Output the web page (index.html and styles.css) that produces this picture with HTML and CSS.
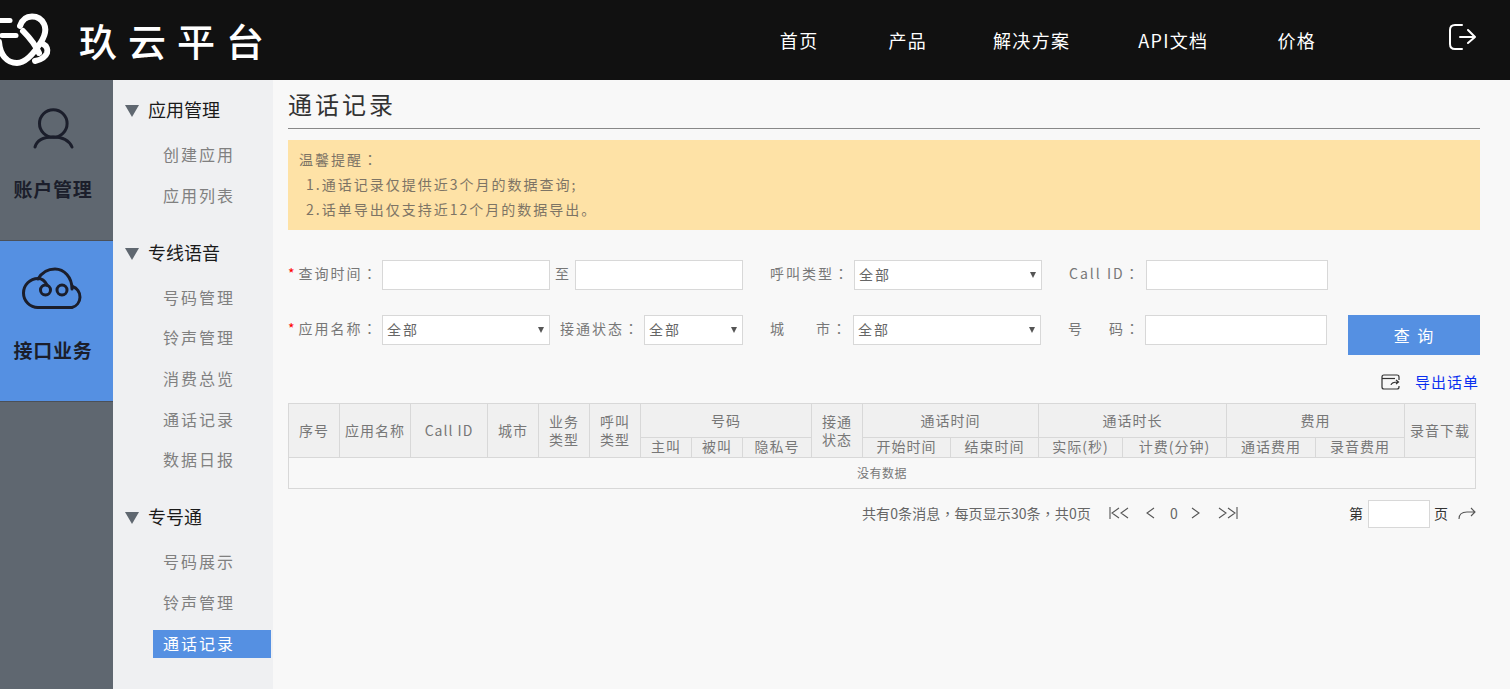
FILE: index.html
```html
<!DOCTYPE html>
<html lang="zh-CN">
<head>
<meta charset="utf-8">
<title>通话记录 - 玖云平台</title>
<link rel="stylesheet" href="styles.css">
</head>
<body>
<header class="topbar">
  <div class="brand">
    <svg class="brand-mark" width="52" height="80" viewBox="0 0 52 80" fill="none" stroke="#fff" stroke-width="6" stroke-linecap="round">
      <path d="M-1 42C0 55 7 63 17 63C27 63 36 50 41 42C46 34 46 28 44 24C41 18 36 16.500 32 16.500C26 16.500 22 20 20 26"/>
      <path d="M23 31C29 37 35 44 39 53"/>
      <path d="M43 44C47 46 48 50 47 53C45 58 40 60 35 61"/>
      <path d="M-2 20.500H10" stroke-width="5"/>
      <path d="M2 35.500H16" stroke-width="5"/>
    </svg>
    <span class="brand-name">玖云平台</span>
  </div>
  <nav class="topnav">
    <a>首页</a><a>产品</a><a>解决方案</a><a>API文档</a><a>价格</a>
  </nav>
  <svg class="logout" width="28" height="28" viewBox="0 0 28 28" fill="none" stroke="#fff" stroke-width="2" stroke-linecap="round" stroke-linejoin="round">
    <path d="M14 2H7C3.500 2 2 4 2 7V21C2 24 3.500 26 7 26H14"/>
    <path d="M12 14H27M20 7L27 14L20 20"/>
  </svg>
</header>
<div class="layout">
  <aside class="rail">
    <div class="rail-item">
      <svg width="90" height="60" viewBox="0 0 90 60" fill="none" stroke="#1b1e2b" stroke-width="3" stroke-linecap="round">
        <circle cx="42.300" cy="28.500" r="13.800"/>
        <path d="M24 52C26 45 32 42 42 42C52 42 58 45 61 52"/>
      </svg>
      <span class="rail-label">账户管理</span>
    </div>
    <div class="rail-item is-active">
      <svg width="90" height="60" viewBox="-1 0 90 60" fill="none" stroke="#1b1e2b" stroke-width="3" stroke-linecap="round">
        <path d="M26 51.500H60A11 11 0 0 0 60.500 30.500"/>
        <path d="M60 33C60 21 52 13 43 13C35 13 29 18 26 23"/>
        <path d="M26 51.500A14.500 14.500 0 0 1 26 22.500C30 22.500 33 25 35 29"/>
        <circle cx="33.500" cy="34" r="5"/>
        <circle cx="50" cy="34" r="5"/>
      </svg>
      <span class="rail-label">接口业务</span>
    </div>
  </aside>
  <aside class="sidebar">
    <section class="side-group">
      <h3 class="side-title"><i class="tri"></i>应用管理</h3>
      <a class="side-link">创建应用</a>
      <a class="side-link">应用列表</a>
    </section>
    <section class="side-group">
      <h3 class="side-title"><i class="tri"></i>专线语音</h3>
      <a class="side-link">号码管理</a>
      <a class="side-link">铃声管理</a>
      <a class="side-link">消费总览</a>
      <a class="side-link">通话记录</a>
      <a class="side-link">数据日报</a>
    </section>
    <section class="side-group">
      <h3 class="side-title"><i class="tri"></i>专号通</h3>
      <a class="side-link">号码展示</a>
      <a class="side-link">铃声管理</a>
      <a class="side-link is-current">通话记录</a>
    </section>
  </aside>
  <main class="content">
    <h1 class="page-title">通话记录</h1>
    <div class="notice">
      <p>温馨提醒<span class="cp" lang="zh-TW">：</span></p>
      <p class="notice-item">1.通话记录仅提供近3个月的数据查询;</p>
      <p class="notice-item">2.话单导出仅支持近12个月的数据导出。</p>
    </div>
    <form class="filters">
      <div class="row">
        <label class="lbl w94"><em>*</em>查询时间<span class="cp" lang="zh-TW">：</span></label>
        <input class="field w168" type="text">
        <span class="to">至</span>
        <input class="field w168" type="text">
        <label class="lbl w84 ml27">呼叫类型<span class="cp" lang="zh-TW">：</span></label>
        <div class="sel w188"><select><option>全部</option></select></div>
        <label class="lbl w77 ml27">Call ID<span class="cp" lang="zh-TW">：</span></label>
        <input class="field w182" type="text">
      </div>
      <div class="row">
        <label class="lbl w94"><em>*</em>应用名称<span class="cp" lang="zh-TW">：</span></label>
        <div class="sel w168"><select><option>全部</option></select></div>
        <label class="lbl w84 ml10">接通状态<span class="cp" lang="zh-TW">：</span></label>
        <div class="sel w99"><select><option>全部</option></select></div>
        <label class="lbl w83 ml27"><span class="gap30">城</span>市<span class="cp" lang="zh-TW">：</span></label>
        <div class="sel w188"><select><option>全部</option></select></div>
        <label class="lbl w77 ml27"><span class="gap25">号</span>码<span class="cp" lang="zh-TW">：</span></label>
        <input class="field w182" type="text">
        <button class="search" type="button">查 询</button>
      </div>
    </form>
    <div class="export">
      <svg width="19" height="16" viewBox="0 0 19 16" fill="none" stroke="#333" stroke-width="1.200">
        <path d="M18 6V3C18 1.500 17 1 16 1H3C1.500 1 1 2 1 3V13C1 14.500 2 15 3 15H16C17 15 18 14.500 18 13V12"/>
        <path d="M1 4.500H14"/>
        <path d="M10 11C10.500 8.500 12.500 8 17 8M15 6L17.500 8L15 10"/>
      </svg>
      <a class="export-link">导出话单</a>
    </div>
    <table class="grid">
      <colgroup>
        <col class="c51"><col class="c71"><col class="c77"><col class="c51"><col class="c51"><col class="c51"><col class="c51"><col class="c51"><col class="c69"><col class="c51"><col class="c88"><col class="c88"><col class="c84"><col class="c104"><col class="c89"><col class="c89"><col class="c71">
      </colgroup>
      <thead>
        <tr class="r1">
          <th rowspan="2">序号</th>
          <th rowspan="2">应用名称</th>
          <th rowspan="2">Call ID</th>
          <th rowspan="2">城市</th>
          <th rowspan="2">业务<br>类型</th>
          <th rowspan="2">呼叫<br>类型</th>
          <th colspan="3">号码</th>
          <th rowspan="2">接通<br>状态</th>
          <th colspan="2">通话时间</th>
          <th colspan="2">通话时长</th>
          <th colspan="2">费用</th>
          <th rowspan="2">录音下载</th>
        </tr>
        <tr class="r2">
          <th>主叫</th><th>被叫</th><th>隐私号</th>
          <th>开始时间</th><th>结束时间</th>
          <th>实际(秒)</th><th>计费(分钟)</th>
          <th>通话费用</th><th>录音费用</th>
        </tr>
      </thead>
      <tbody>
        <tr class="r3"><td colspan="17">没有数据</td></tr>
      </tbody>
    </table>
    <div class="pager">
      <span class="pager-info">共有0条消息<span class="cp" lang="zh-TW">，</span>每页显示30条<span class="cp" lang="zh-TW">，</span>共0页</span>
      <svg class="p-first" width="21" height="12" viewBox="0 0 21 12" fill="none" stroke="#555" stroke-width="1.100"><path d="M1 0V12M10 1L3 6L10 11M19 1L12 6L19 11"/></svg>
      <svg class="p-prev" width="10" height="12" viewBox="0 0 10 12" fill="none" stroke="#555" stroke-width="1.100"><path d="M9 1L2 6L9 11"/></svg>
      <span class="p-num">0</span>
      <svg class="p-next" width="10" height="12" viewBox="0 0 10 12" fill="none" stroke="#555" stroke-width="1.100"><path d="M1 1L8 6L1 11"/></svg>
      <svg class="p-last" width="21" height="12" viewBox="0 0 21 12" fill="none" stroke="#555" stroke-width="1.100"><path d="M2 1L9 6L2 11M11 1L18 6L11 11M20 0V12"/></svg>
      <span class="p-lead">第</span>
      <input class="p-input" type="text">
      <span class="p-page">页</span>
      <svg class="p-go" width="18" height="12" viewBox="0 0 18 12" fill="none" stroke="#555" stroke-width="1.100"><path d="M1 12C1 7 4 5 9 5H17M13 1L17 5L13 9"/></svg>
    </div>
  </main>
</div>
</body>
</html>
```
FILE: styles.css
```css
* { box-sizing: border-box; }
html, body { margin: 0; padding: 0; height: 100%; overflow: hidden; }
body {
  font-family: "Noto Sans CJK SC", "Noto Sans", sans-serif;
  background: #f8f8f8;
  color: #666;
  font-size: 14px;
}
h1, h3, p { margin: 0; font-weight: normal; }
.cp { font-family: "Noto Sans CJK TC", "Noto Sans CJK SC", sans-serif; }

.topbar {
  height: 80px;
  background: #111;
  display: flex;
  align-items: center;
  color: #fff;
}
.brand { display: flex; align-items: center; }
.brand-mark { display: block; overflow: hidden; }
.brand-name {
  margin-left: 27px;
  font-size: 38px;
  font-weight: 500;
  line-height: 44px;
  letter-spacing: 11px;
  color: #fff;
  white-space: nowrap;
}
.topnav {
  margin-left: auto;
  display: flex;
  gap: 69px;
  font-size: 18px;
  letter-spacing: 1.300px;
}
.topnav a { color: #fff; white-space: nowrap; }
.topnav a:nth-child(2) { margin-left: 1px; }
.topnav a:nth-child(3) { margin-left: -3px; }
.topnav a:nth-child(4) { margin-left: -1px; }
.logout { margin-left: 132px; margin-right: 34px; margin-top: -6px; }

.layout { display: flex; height: 609px; }

.rail { width: 113px; background: #5f6770; flex: none; }
.rail-item {
  height: 161px;
  padding-top: 15px;
  display: flex;
  flex-direction: column;
  align-items: center;
  border-bottom: 1px solid #4b5058;
}
.rail-item.is-active { background: #5590e2; }
.rail-item svg { display: block; margin-left: -1px; }
.rail-label {
  margin-top: 20px;
  margin-right: 7px;
  font-size: 19px;
  font-weight: 700;
  line-height: 28px;
  letter-spacing: 0.700px;
  color: #1b1e2b;
}

.sidebar { width: 160px; background: #eff0f2; flex: none; padding-top: 16px; }
.side-group { margin-bottom: 29px; }
.side-title {
  display: flex;
  align-items: center;
  height: 28px;
  padding-left: 12px;
  padding-bottom: 2px;
  margin-bottom: 17px;
  font-size: 18px;
  color: #1a1a1a;
  line-height: 26px;
}
.tri {
  width: 0;
  height: 0;
  margin-right: 9px;
  margin-top: 4px;
  border-left: 7.500px solid transparent;
  border-right: 7.500px solid transparent;
  border-top: 12px solid #5f6770;
}
.side-link {
  display: block;
  height: 28px;
  margin: 0 2px 12.700px 40px;
  padding-left: 10px;
  font-size: 16px;
  line-height: 26px;
  letter-spacing: 2px;
  color: #808080;
}
.side-link.is-current { background: #5590e2; color: #fff; }

.content { flex: 1; padding: 0 30px 0 15px; min-width: 0; }
.page-title {
  height: 49px;
  border-bottom: 1px solid #888;
  font-size: 24px;
  line-height: 48px;
  letter-spacing: 3px;
  color: #333;
}
.notice {
  margin-top: 11px;
  height: 90px;
  padding: 7px 11px;
  background: #fee2a6;
  color: #7d7465;
  font-size: 14px;
  line-height: 25px;
  letter-spacing: 2px;
}
.notice-item { padding-left: 7px; }

.filters { margin-top: 30px; }
.row { display: flex; align-items: flex-start; margin-bottom: 25px; height: 30px; }
.row + .row { margin-bottom: 0; height: 40px; }
.lbl {
  height: 30px;
  line-height: 26px;
  font-size: 14px;
  letter-spacing: 2px;
  color: #777;
  white-space: nowrap;
  flex: none;
}
.lbl em { font-style: normal; color: #f00; margin-right: 4px; letter-spacing: 0; font-size: 14px; }
.w94 { width: 94px; }
.w84 { width: 84px; }
.w83 { width: 83px; }
.w77 { width: 77px; }
.w168 { width: 168px; }
.w188 { width: 188px; }
.w182 { width: 182px; }
.w99 { width: 99px; }
.ml27 { margin-left: 27px; }
.ml10 { margin-left: 10px; }
.gap30 { margin-right: 30px; }
.gap25 { margin-right: 25px; }
.to { width: 25px; padding-left: 5px; line-height: 26px; color: #777; flex: none; }
.field {
  height: 30px;
  border: 1px solid #d8d8d8;
  background: #fff;
  flex: none;
  padding: 0 4px;
}
.sel { position: relative; height: 30px; flex: none; }
.sel select {
  appearance: none;
  width: 100%;
  height: 30px;
  border: 1px solid #d8d8d8;
  border-radius: 0;
  background: #fff;
  padding: 0 0 2px 4px;
  font: inherit;
  font-size: 14px;
  letter-spacing: 2px;
  color: #666;
}
.sel::after {
  content: "";
  position: absolute;
  right: 6px;
  top: 12px;
  border-left: 3px solid transparent;
  border-right: 3px solid transparent;
  border-top: 6px solid #555;
}
.search {
  margin-left: 21px;
  width: 132px;
  height: 40px;
  border: 0;
  padding: 0 0 0 1px;
  background: #5590e2;
  color: #fff;
  font: inherit;
  font-size: 16px;
  letter-spacing: 2px;
  flex: none;
}

.export {
  margin-top: 17px;
  height: 20px;
  display: flex;
  align-items: center;
  justify-content: flex-end;
  gap: 15px;
  padding-right: 2px;
}
.export-link { font-size: 15px; line-height: 20px; color: #0a2ff0; letter-spacing: 1px; margin-right: -1px; }

.grid {
  margin-top: 11px;
  width: 1187px;
  table-layout: fixed;
  border-collapse: collapse;
  border: 1px solid #d8d8d8;
}
.grid th, .grid td {
  border: 1px solid #d8d8d8;
  padding: 0 0 2px;
  text-align: center;
  font-weight: normal;
  color: #777;
  white-space: nowrap;
  overflow: hidden;
}
.grid th { background: #f0f0f0; font-size: 14px; line-height: 18px; letter-spacing: 1px; }
.grid .r2 th { line-height: 17px; }
.grid td { font-size: 12px; letter-spacing: 0.500px; }
.r1 { height: 34px; }
.r2 { height: 20px; }
.r3 { height: 31px; }
.c51 { width: 51px; }
.c71 { width: 71px; }
.c77 { width: 77px; }
.c69 { width: 69px; }
.c88 { width: 88px; }
.c84 { width: 84px; }
.c104 { width: 104px; }
.c89 { width: 89px; }

.pager {
  margin-top: 11px;
  height: 28px;
  display: flex;
  align-items: center;
  padding-left: 574px;
  font-size: 14px;
  color: #666;
}
.pager > span, .pager > svg { margin-top: -3px; }
.pager-info { width: 247px; white-space: nowrap; flex: none; letter-spacing: 0.100px; }
.p-prev { margin-left: 15px; }
.p-num { width: 9px; margin-left: 15px; font-size: 14px; }
.p-next { margin-left: 12px; }
.p-last { margin-left: 16px; }
.p-lead { margin-left: 111px; color: #333; width: 19px; }
.p-input { width: 62px; height: 28px; border: 1px solid #d8d8d8; background: #fff; flex: none; }
.p-page { margin-left: 4px; color: #333; width: 20px; }
.p-go { margin-left: 4px; }
```
